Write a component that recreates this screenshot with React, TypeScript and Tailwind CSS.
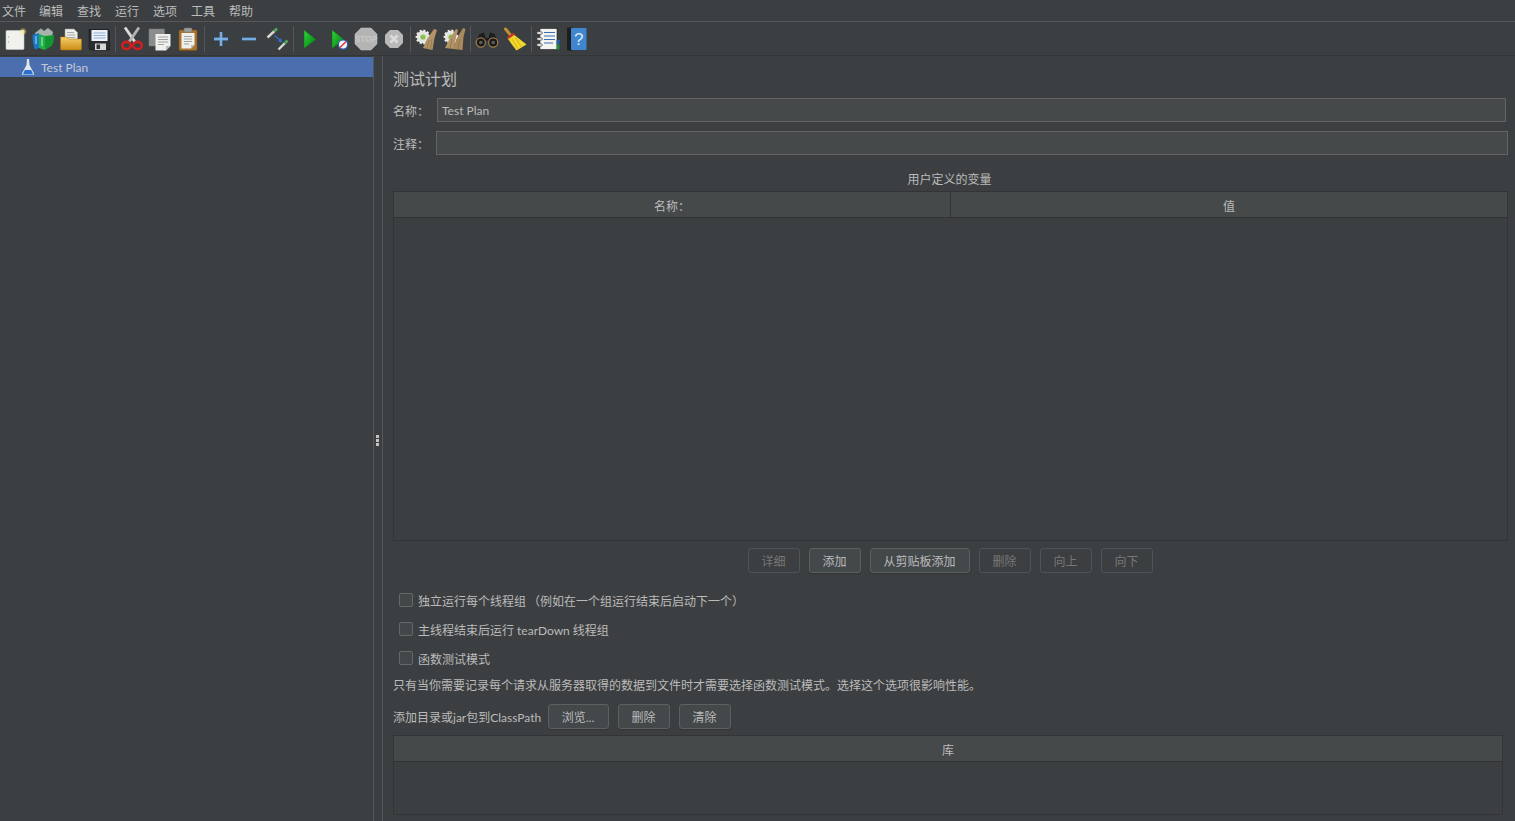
const FONT = "font-['Lato','Noto_Sans_CJK_SC',sans-serif]";

const menus = ["文件", "编辑", "查找", "运行", "选项", "工具", "帮助"];

function NewIcon() {
  return (
    <svg width="24" height="24" viewBox="0 0 24 24">
      <defs>
        <radialGradient id="spark">
          <stop offset="0" stopColor="#fff6a8" />
          <stop offset="1" stopColor="#f0e070" stopOpacity="0" />
        </radialGradient>
      </defs>
      <rect x="3" y="3.5" width="18" height="19" rx="1" fill="#f1f1ee" stroke="#c9c9c4" strokeWidth="0.6" />
      <circle cx="5.5" cy="10" r="0.7" fill="#aaa" />
      <circle cx="5.5" cy="15" r="0.7" fill="#aaa" />
      <circle cx="20" cy="4.5" r="4" fill="url(#spark)" />
    </svg>
  );
}

function TemplatesIcon() {
  return (
    <svg width="24" height="24" viewBox="0 0 24 24">
      <path d="M4 6 L10 1.5 L13 4 L17 1 L22 5 L20 13 L6 13 Z" fill="#a9b3ad" stroke="#7d8782" strokeWidth="0.5" />
      <path d="M1.5 8 L8 6 L8 21 L4 22.5 Q1.5 18 1.5 8 Z" fill="#1b78c8" />
      <path d="M8 7 L14 9 L14 23 L8 21 Z" fill="#1eb04a" />
      <path d="M14 9 L23 8 Q23 17 20.5 19 L14 23 Z" fill="#13962f" />
      <path d="M5 9 L5 17 M11 10 L11 19" stroke="#dff5e5" strokeWidth="0.8" />
    </svg>
  );
}

function OpenIcon() {
  return (
    <svg width="24" height="24" viewBox="0 0 24 24">
      <defs>
        <linearGradient id="folder" x1="0" y1="0" x2="0" y2="1">
          <stop offset="0" stopColor="#f6cf6a" />
          <stop offset="1" stopColor="#c98c18" />
        </linearGradient>
      </defs>
      <path d="M6 2 H15 L18.5 5.5 V15 H6 Z" fill="#ecece8" stroke="#999" strokeWidth="0.5" />
      <path d="M8 5.5 H15 M8 8 H16 M8 10.5 H16" stroke="#999" strokeWidth="0.8" />
      <path d="M1.5 10 H8 L10 12 H22.5 V22 Q22.5 23 21.5 23 H2.5 Q1.5 23 1.5 22 Z" fill="url(#folder)" stroke="#a87414" strokeWidth="0.5" />
    </svg>
  );
}

function SaveIcon() {
  return (
    <svg width="24" height="24" viewBox="0 0 24 24">
      <path d="M2 2.5 H21 L22.5 4 V23 H3.5 L2 21.5 Z" fill="#2b2d30" stroke="#111" strokeWidth="0.5" />
      <rect x="4.5" y="3" width="16" height="11" fill="#eef2f6" />
      <path d="M6.5 6 H18.5 M6.5 8.5 H18.5 M6.5 11 H18.5" stroke="#8fb0d2" strokeWidth="1" />
      <rect x="8" y="16.5" width="11" height="6.5" fill="#d6d6d6" />
      <rect x="9.5" y="17.5" width="3.5" height="4.5" fill="#333" />
    </svg>
  );
}

function CutIcon() {
  return (
    <svg width="24" height="24" viewBox="0 0 24 24">
      <path d="M5 0.5 L15 15" stroke="#dcdcdc" strokeWidth="2.8" />
      <path d="M19 0.5 L9 15" stroke="#b4b4b4" strokeWidth="2.8" />
      <ellipse cx="6.5" cy="18.5" rx="4.2" ry="3.6" fill="none" stroke="#d01f1f" strokeWidth="2.6" />
      <ellipse cx="17.5" cy="18.5" rx="4.2" ry="3.6" fill="none" stroke="#d01f1f" strokeWidth="2.6" />
    </svg>
  );
}

function CopyIcon() {
  return (
    <svg width="24" height="24" viewBox="0 0 24 24">
      <rect x="1" y="2" width="15.5" height="17" fill="#8b8d8e" stroke="#77797a" strokeWidth="0.5" />
      <path d="M7.5 7 H22.5 V19 L18 23.5 H7.5 Z" fill="#efefec" />
      <path d="M22.5 19 L18 23.5 V19 Z" fill="#bdbdb8" />
      <path d="M10 10 H20 M10 12.5 H20 M10 15 H20 M10 17.5 H16" stroke="#8f8f8f" strokeWidth="0.8" />
    </svg>
  );
}

function PasteIcon() {
  return (
    <svg width="24" height="24" viewBox="0 0 24 24">
      <rect x="3" y="3" width="18" height="20.5" rx="1.5" fill="#a9752e" stroke="#7c5216" strokeWidth="0.6" />
      <path d="M5.5 6 H18.5 V18 L15 21.5 H5.5 Z" fill="#efefec" />
      <path d="M18.5 18 L15 21.5 V18 Z" fill="#bdbdb8" />
      <rect x="8" y="1" width="8" height="4.2" rx="1" fill="#9c9c98" stroke="#6c6c68" strokeWidth="0.5" />
      <path d="M8 9.5 H16 M8 12 H16 M8 14.5 H16 M8 17 H13" stroke="#8f8f8f" strokeWidth="0.8" />
    </svg>
  );
}

function PlusIcon() {
  return (
    <svg width="24" height="24" viewBox="0 0 24 24">
      <path d="M12 5 V19 M5 12 H19" stroke="#5f9bd8" strokeWidth="2.8" />
      <path d="M12 5 V19 M5 12 H19" stroke="#8fc0ee" strokeWidth="1" />
    </svg>
  );
}

function MinusIcon() {
  return (
    <svg width="24" height="24" viewBox="0 0 24 24">
      <path d="M5 12 H19" stroke="#5f9bd8" strokeWidth="2.8" />
      <path d="M5 12 H19" stroke="#8fc0ee" strokeWidth="1" />
    </svg>
  );
}

function ToggleIcon() {
  return (
    <svg width="24" height="24" viewBox="0 0 24 24">
      <path d="M2.5 10.5 L9.5 4" stroke="#d6d6d2" strokeWidth="2.4" />
      <path d="M9 4.5 L12 1.5" stroke="#4fa85a" strokeWidth="2.6" />
      <path d="M13.5 22.5 L20 16" stroke="#d6d6d2" strokeWidth="2.4" />
      <path d="M19.5 16.5 L22.5 13.5" stroke="#4fa85a" strokeWidth="2.6" />
      <path d="M9.5 8.5 L16 14" stroke="#2f6fc4" strokeWidth="1.6" />
      <path d="M17.5 15.5 L12.8 14.6 L15.8 11 Z" fill="#2f6fc4" />
    </svg>
  );
}

function RunIcon({ noTimer }: { noTimer?: boolean }) {
  const id = noTimer ? "runB" : "runA";
  return (
    <svg width="24" height="24" viewBox="0 0 24 24">
      <defs>
        <linearGradient id={id} x1="0" y1="0" x2="1" y2="1">
          <stop offset="0" stopColor="#2fd43a" />
          <stop offset="1" stopColor="#057a14" />
        </linearGradient>
      </defs>
      <path d="M6 3 L18 12.5 L6 21.5 Z" fill={`url(#${id})`} stroke="#0a6a16" strokeWidth="0.5" />
      {noTimer && (
        <g>
          <circle cx="17" cy="17.5" r="4.6" fill="#f2f2f2" stroke="#2f62b4" strokeWidth="1.2" />
          <path d="M14 20.5 L20 14.5" stroke="#d33" strokeWidth="1.4" />
        </g>
      )}
    </svg>
  );
}

function StopIcon() {
  return (
    <svg width="24" height="24" viewBox="0 0 24 24">
      <path d="M7 1 H17 L23 7 V17 L17 23 H7 L1 17 V7 Z" fill="#b4b4b4" stroke="#c4c4c4" strokeWidth="0.5" />
      <text x="12" y="15.2" textAnchor="middle" fontSize="8.4" fontWeight="700" fill="#c9c9c9" fontFamily="Liberation Sans, sans-serif">
        STOP
      </text>
    </svg>
  );
}

function ShutdownIcon() {
  return (
    <svg width="24" height="24" viewBox="0 0 24 24">
      <path d="M8 3 H16 L21 8 V16 L16 21 H8 L3 16 V8 Z" fill="#b9b9b9" />
      <path d="M8.5 8.5 L15.5 15.5 M15.5 8.5 L8.5 15.5" stroke="#dcdcdc" strokeWidth="2.6" />
    </svg>
  );
}

function Gear() {
  return (
    <g>
      <circle cx="9" cy="10" r="6.2" fill="#e4e4e0" stroke="#ecece8" strokeWidth="2.4" strokeDasharray="2 1.6" />
      <circle cx="9" cy="10" r="2.6" fill="#8cc04c" />
    </g>
  );
}

function ClearIcon() {
  return (
    <svg width="24" height="24" viewBox="0 0 24 24">
      <Gear />
      <path d="M20 2 L23 3 L20.5 11 L18.5 23 L9 21 L13 12 Z" fill="#b39468" />
      <path d="M13 21.5 L15 13 M16.5 22 L18 12" stroke="#8a6d44" strokeWidth="0.7" />
    </svg>
  );
}

function ClearAllIcon() {
  return (
    <svg width="24" height="24" viewBox="0 0 24 24">
      <Gear />
      <path d="M14 2 L16 3 L14 10 L12 22 L3 21 L8 11 Z" fill="#b39468" />
      <path d="M21 1 L23.5 2 L21.5 10 L20.5 23 L11 22 L15 11 Z" fill="#a98a5e" />
      <path d="M8 21 L10 12 M16 22 L17.5 12" stroke="#8a6d44" strokeWidth="0.7" />
    </svg>
  );
}

function SearchIcon() {
  return (
    <svg width="24" height="24" viewBox="0 0 24 24">
      <path d="M4.5 7 L9 5.5 L10.5 11 L13.5 11 L15 5.5 L19.5 7 L23 15 L14 15 L12 13 L10 15 L1 15 Z" fill="#1d1d1d" />
      <circle cx="5.8" cy="15.5" r="4.6" fill="#1a1a1a" stroke="#a07a4c" strokeWidth="1.2" />
      <circle cx="18.2" cy="15.5" r="4.6" fill="#1a1a1a" stroke="#a07a4c" strokeWidth="1.2" />
      <circle cx="5.8" cy="15.5" r="1.8" fill="#5c5c5c" />
      <circle cx="18.2" cy="15.5" r="1.8" fill="#5c5c5c" />
    </svg>
  );
}

function BroomIcon() {
  return (
    <svg width="24" height="24" viewBox="0 0 24 24">
      <path d="M2.5 2 L8 8.5" stroke="#c78f28" strokeWidth="3" strokeLinecap="round" />
      <path d="M10 7 L14 10 L23.5 17.5 L13.5 23.5 Q8 17 4.5 11 Z" fill="#f3d62a" />
      <path d="M5 11 L11 6.5" stroke="#c8322a" strokeWidth="2.4" />
      <path d="M9 12 L15 22 M12.5 10.5 L18.5 20.5" stroke="#c9a818" strokeWidth="0.7" />
    </svg>
  );
}

function LogIcon() {
  return (
    <svg width="24" height="24" viewBox="0 0 24 24">
      <rect x="4" y="1.5" width="17" height="21" fill="#f3f3f0" stroke="#222" strokeWidth="0.6" />
      <rect x="20.5" y="13" width="3" height="4.5" fill="#2a60a8" />
      <rect x="20.5" y="17.5" width="3" height="5" fill="#2a8a3c" />
      <path d="M8 5.5 H19 M8 9 H19 M8 12.5 H19 M8 16 H17" stroke="#3a70b4" strokeWidth="1.1" />
      <ellipse cx="3.5" cy="6" rx="3" ry="1.4" fill="#eee" stroke="#222" strokeWidth="0.6" />
      <ellipse cx="3.5" cy="12" rx="3" ry="1.4" fill="#eee" stroke="#222" strokeWidth="0.6" />
      <ellipse cx="3.5" cy="18" rx="3" ry="1.4" fill="#eee" stroke="#222" strokeWidth="0.6" />
    </svg>
  );
}

function HelpIcon() {
  return (
    <svg width="24" height="24" viewBox="0 0 24 24">
      <rect x="3" y="0.5" width="6" height="23" fill="#1d1d1d" />
      <rect x="7" y="1" width="15.5" height="22" rx="0.8" fill="#3f86cf" />
      <text x="14.8" y="18" textAnchor="middle" fontSize="17" fill="#dceafa" fontFamily="Liberation Sans, sans-serif">
        ?
      </text>
    </svg>
  );
}

function Sep({ narrow }: { narrow?: boolean }) {
  return (
    <div className={`${narrow ? "w-[4px]" : "w-[5px]"} h-[26px] flex justify-center`}>
      <div className="w-px h-full bg-[#555759]" />
    </div>
  );
}

function Tool({ children }: { children: React.ReactNode }) {
  return <div className="w-[28px] h-[24px] flex items-center justify-center">{children}</div>;
}

function Toolbar() {
  return (
    <div className="h-[34px] flex items-center pl-[1px] border-b border-[#333537]">
      <Tool><NewIcon /></Tool>
      <Tool><TemplatesIcon /></Tool>
      <Tool><OpenIcon /></Tool>
      <Tool><SaveIcon /></Tool>
      <Sep />
      <Tool><CutIcon /></Tool>
      <Tool><CopyIcon /></Tool>
      <Tool><PasteIcon /></Tool>
      <Sep />
      <Tool><PlusIcon /></Tool>
      <Tool><MinusIcon /></Tool>
      <Tool><ToggleIcon /></Tool>
      <Sep />
      <Tool><RunIcon /></Tool>
      <Tool><RunIcon noTimer /></Tool>
      <Tool><StopIcon /></Tool>
      <Tool><ShutdownIcon /></Tool>
      <Sep narrow />
      <Tool><ClearIcon /></Tool>
      <Tool><ClearAllIcon /></Tool>
      <Sep />
      <Tool><SearchIcon /></Tool>
      <Tool><BroomIcon /></Tool>
      <Sep />
      <Tool><LogIcon /></Tool>
      <Tool><HelpIcon /></Tool>
    </div>
  );
}

function FlaskIcon() {
  return (
    <svg width="16" height="18" viewBox="0 0 16 18">
      <path d="M7 1 L9 1 L9.5 7 L14 15.5 Q14.5 17 13 17 L3 17 Q1.5 17 2 15.5 L6.5 7 Z" fill="#e4e8ee" />
      <path d="M4.8 12 L11.2 12 L13.2 16.5 L2.8 16.5 Z" fill="#2a6fd0" />
    </svg>
  );
}

function Btn({ label, w, off }: { label: string; w: string; off?: boolean }) {
  return (
    <div
      className={`${w} h-[25px] pt-[2px] pr-[1px] rounded-[3px] border flex items-center justify-center text-[12px] ${
        off ? "border-[#505355] text-[#777777]" : "border-[#5e6060] bg-[#43484a] text-[#bbbbbb] shadow-[0_1px_1px_#333537]"
      }`}
    >
      {label}
    </div>
  );
}

function Check({ children }: { children: React.ReactNode }) {
  return (
    <div className="h-[29px] flex items-center pl-[6px] gap-[5px]">
      <div className="w-[14px] h-[14px] mb-[2px] rounded-[2px] border border-[#656768] bg-[#43474a]" />
      <span className="pt-[2px] text-[12px] leading-[16px]">{children}</span>
    </div>
  );
}

export default function App() {
  return (
    <div className={`w-[1515px] h-[821px] overflow-hidden flex flex-col bg-[#3c3f41] text-[#bbbbbb] ${FONT}`}>
      <div className="h-[22px] flex items-center gap-[14px] pl-[2px] pt-[2px] border-b border-[#555759] text-[12px]">
        {menus.map((m, i) => (
          <span key={m} className={i === 0 ? "-mr-px" : ""}>
            {m}
          </span>
        ))}
      </div>
      <Toolbar />
      <div className="flex-1 flex min-h-0">
        <div className="w-[374px] border-r border-[#555759]">
          <div className="mt-[1px] h-[20px] bg-[#4b6eaf] flex items-center pl-[20px] gap-[5px] text-[12px]">
            <FlaskIcon />
            <span className="pt-[2px] text-[#c4cad4]">Test Plan</span>
          </div>
        </div>
        <div className="w-[9px] border-r border-[#555759] flex flex-col items-center justify-center gap-[1px] pt-[4px] pr-px">
          <div className="w-[3px] h-[3px] bg-[#c4c4c4]" />
          <div className="w-[3px] h-[3px] bg-[#c4c4c4]" />
          <div className="w-[3px] h-[3px] bg-[#c4c4c4]" />
        </div>
        <div className="flex-1 min-w-0 pl-[10px] pr-[7px]">
          <div className="mt-[12px] h-[22px] flex items-center text-[16px]">测试计划</div>

          <div className="mt-[8px] flex items-center h-[24px]">
            <span className="w-[44px] pt-[4px] text-[12px]">名称：</span>
            <div className="w-[1069px] h-full pt-[2px] bg-[#45494a] border border-[#646464] flex items-center pl-[4px] text-[12px]">
              Test Plan
            </div>
          </div>
          <div className="mt-[9px] flex items-center h-[24px]">
            <span className="w-[43px] pt-[4px] text-[12px]">注释：</span>
            <div className="w-[1072px] h-full bg-[#45494a] border border-[#646464]" />
          </div>

          <div className="mt-[15px] h-[21px] w-[1113px] text-center text-[12px] leading-[20px]">用户定义的变量</div>
          <div className="w-[1115px] h-[350px] border border-[#323436] flex flex-col">
            <div className="h-[26px] pt-[4px] flex bg-[#45494a] border-b border-[#323436] text-[12px]">
              <div className="w-[557px] -mt-[4px] pt-[4px] border-r border-[#323436] flex items-center justify-center">名称：</div>
              <div className="flex-1 flex items-center justify-center">值</div>
            </div>
          </div>

          <div className="mt-[7px] w-[1115px] pl-[355px] flex gap-[9px]">
            <Btn label="详细" w="w-[52px]" off />
            <Btn label="添加" w="w-[52px]" />
            <Btn label="从剪贴板添加" w="w-[100px]" />
            <Btn label="删除" w="w-[52px]" off />
            <Btn label="向上" w="w-[52px]" off />
            <Btn label="向下" w="w-[52px]" off />
          </div>

          <div className="mt-[13px]">
            <Check>
              独立运行每个线程组<span className="ml-[2px]">（例如在一个组运行结束后启动下一个）</span>
            </Check>
            <Check>主线程结束后运行 tearDown 线程组</Check>
            <Check>函数测试模式</Check>
          </div>
          <div className="mt-[3px] h-[20px] text-[12px] leading-[20px]">
            只有当你需要记录每个请求从服务器取得的数据到文件时才需要选择函数测试模式。选择这个选项很影响性能。
          </div>

          <div className="mt-[8px] flex items-center gap-[7px]">
            <span className="w-[148px] pt-[2px] text-[12px] whitespace-nowrap">添加目录或jar包到ClassPath</span>
            <div className="flex gap-[9px]">
              <Btn label="浏览..." w="w-[61px]" />
              <Btn label="删除" w="w-[52px]" />
              <Btn label="清除" w="w-[52px]" />
            </div>
          </div>

          <div className="mt-[6px] w-[1110px] h-[80px] border border-[#323436]">
            <div className="h-[26px] pt-[4px] bg-[#45494a] border-b border-[#323436] flex items-center justify-center text-[12px]">
              库
            </div>
          </div>
        </div>
      </div>
    </div>
  );
}
